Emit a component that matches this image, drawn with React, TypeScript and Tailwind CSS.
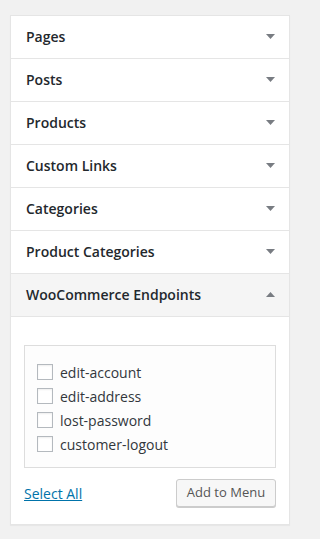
const sections = ['Pages', 'Posts', 'Products', 'Custom Links', 'Categories', 'Product Categories']

const endpoints = ['edit-account', 'edit-address', 'lost-password', 'customer-logout']

function Arrow({ up = false }: { up?: boolean }) {
  return (
    <svg width="9" height="5" viewBox="0 0 9 5" className="shrink-0">
      {up ? <polygon points="0,5 9,5 4.5,0" fill="#787c82" /> : <polygon points="0,0 9,0 4.5,5" fill="#787c82" />}
    </svg>
  )
}

export default function App() {
  return (
    <div className="min-h-[539px] bg-[#f1f1f1] pl-[10px] pt-[15px] font-['Open_Sans','Liberation_Sans',sans-serif]">
      <div className="w-[280px] border border-[#e5e5e5] bg-white shadow-[0_1px_1px_rgba(0,0,0,0.04)]">
        {sections.map((s) => (
          <div key={s} className="flex h-[43px] items-center justify-between border-b border-[#e5e5e5] pb-[2px] pl-[15px] pr-[14px]">
            <span className="text-[14px] font-semibold text-[#23282d]">{s}</span>
            <Arrow />
          </div>
        ))}
        <div className="flex h-[43px] items-center justify-between border-b border-[#e5e5e5] bg-[#f5f5f5] pb-[2px] pl-[15px] pr-[14px]">
          <span className="text-[14px] font-semibold text-[#23282d]">WooCommerce Endpoints</span>
          <Arrow up />
        </div>
        <div className="px-[13px] pb-[17px] pt-[28px]">
          <div className="border border-[#dddddd] bg-[#fdfdfd] pb-[11px] pl-[12px] pt-[14px]">
            {endpoints.map((e) => (
              <label key={e} className="flex h-[24px] items-center gap-[7px] text-[14px] text-[#32373c]">
                <span className="h-[16px] w-[16px] border border-[#b4b9be] bg-white shadow-[inset_0_1px_2px_rgba(0,0,0,0.07)]" />
                {e}
              </label>
            ))}
          </div>
          <div className="mt-[11px] flex items-center justify-between">
            <a href="#" className="text-[14px] text-[#0073aa] underline">Select All</a>
            <button className="h-[28px] w-[100px] rounded-[3px] border border-[#cccccc] bg-[#f7f7f7] text-[13px] text-[#555555] shadow-[0_1px_0_#cccccc]">
              Add to Menu
            </button>
          </div>
        </div>
      </div>
    </div>
  )
}
